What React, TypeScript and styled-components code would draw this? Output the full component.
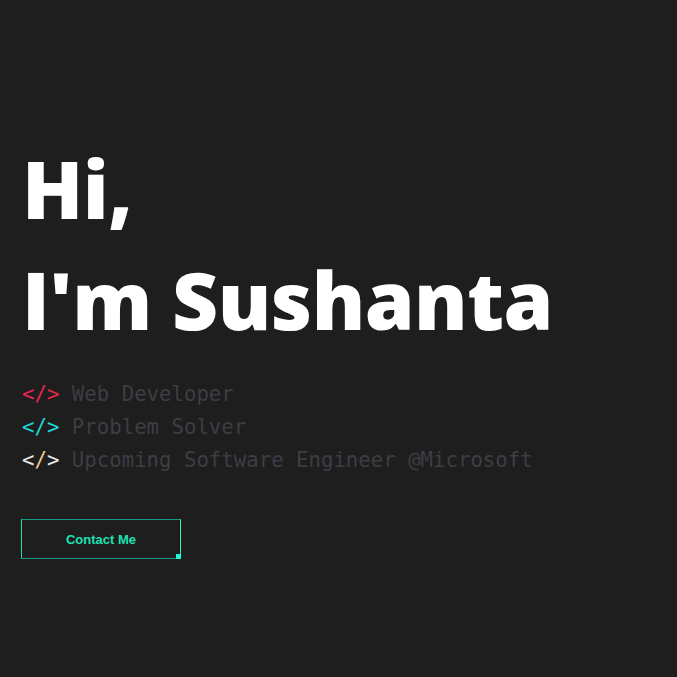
import React from "react";
import styled, { createGlobalStyle } from "styled-components";

const Global = createGlobalStyle`
  html, body { margin: 0; padding: 0; background: #1e1e1e; }
  body { font-family: "Open Sans", sans-serif; }
`;

const Page = styled.main`
  min-height: 677px;
  box-sizing: border-box;
  padding: 132px 22px 0;
  display: flex;
  flex-direction: column;
  align-items: flex-start;
`;

const Title = styled.h1`
  margin: 0;
  font-family: "Open Sans", "Noto Sans", sans-serif;
  font-weight: 800;
  font-size: 80px;
  line-height: 111px;
  color: #ffffff;
  letter-spacing: -0.5px;
`;

const Roles = styled.ul`
  list-style: none;
  margin: 24px 0 0;
  padding: 0;
  font-family: "DejaVu Sans Mono", monospace;
  font-size: 20.7px;
  line-height: 33px;
  color: #3d3d44;
`;

const Role = styled.li`
  white-space: pre;
`;

const Tag = styled.span<{ $c: string }>`
  color: ${(p) => p.$c};
`;

const Slash = styled.span<{ $c: string }>`
  color: ${(p) => p.$c};
`;

const Button = styled.button`
  position: relative;
  margin: 42px 0 0 -1px;
  width: 160px;
  height: 40px;
  background: transparent;
  border: 1px solid #179c84;
  border-left-color: #19d9ae;
  border-right-color: #22f0c8;
  color: #1de3b3;
  font-family: "Liberation Sans", Arial, sans-serif;
  font-weight: 700;
  font-size: 13px;
  cursor: pointer;
  &::after {
    content: "";
    position: absolute;
    right: -1px;
    bottom: -1px;
    width: 5px;
    height: 5px;
    background: #22f5d0;
  }
`;

const roles = [
  { c: "#e3264a", s: "#e3264a", text: "Web Developer" },
  { c: "#1ed7d7", s: "#1ed7d7", text: "Problem Solver" },
  { c: "#e8e8e8", s: "#f5c88a", text: "Upcoming Software Engineer @Microsoft" },
];

export default function App() {
  return (
    <>
      <Global />
      <Page>
        <Title>
          Hi,
          <br />
          I'm Sushanta
        </Title>
        <Roles>
          {roles.map((r) => (
            <Role key={r.text}>
              <Tag $c={r.c}>
                {"<"}
                <Slash $c={r.s}>/</Slash>
                {">"}
              </Tag>
              {" " + r.text}
            </Role>
          ))}
        </Roles>
        <Button>Contact Me</Button>
      </Page>
    </>
  );
}
